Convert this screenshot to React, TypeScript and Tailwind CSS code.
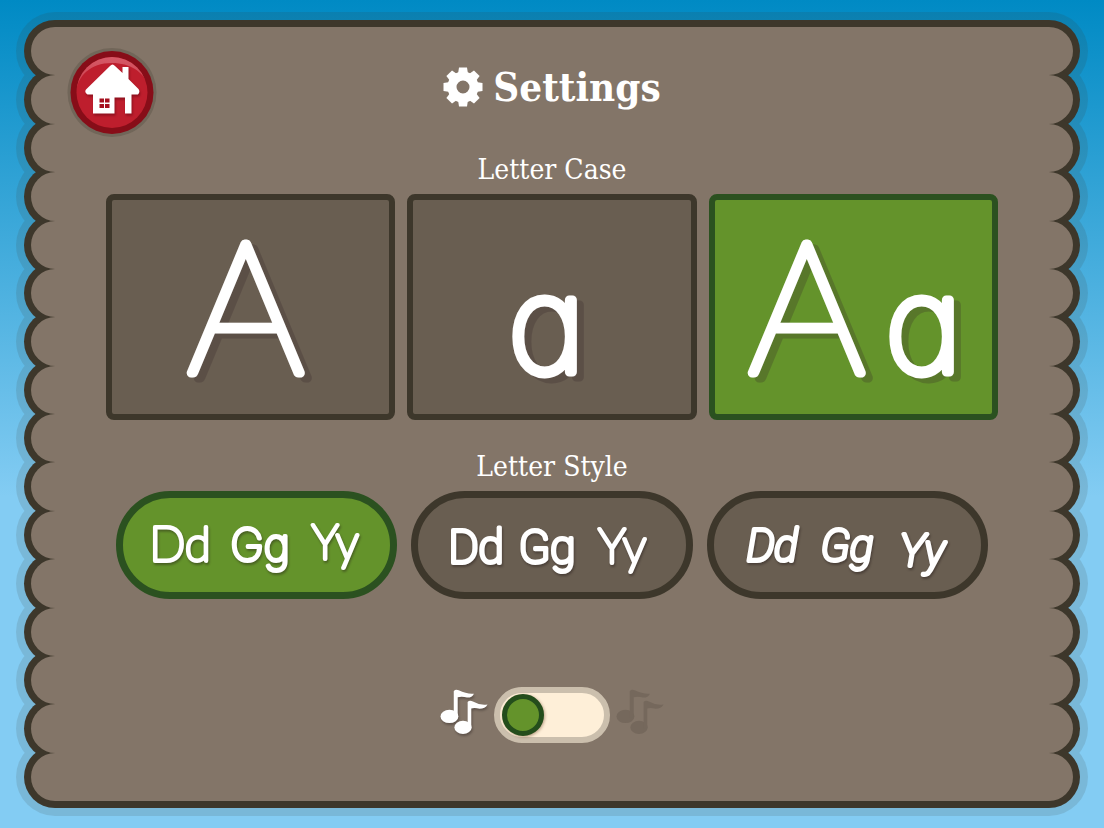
import React, { useState } from "react";

const LOBES = Array.from({ length: 16 });
const TEETH = [0, 45, 90, 135, 180, 225, 270, 315];

const Lobes = ({ className, lobe }: { className: string; lobe: string }) => (
  <div
    aria-hidden="true"
    className={`isolate col-start-1 row-start-1 flex flex-col ${className}`}
  >
    {LOBES.map((_, i) => (
      <div key={i} className={`flex-1 rounded-full ${lobe}`} />
    ))}
  </div>
);

const HomeIcon = () => (
  <svg viewBox="67 47 90 90" className="size-[90px]">
    <defs>
      <clipPath id="button-face">
        <circle cx="112" cy="92.500" r="35.500" />
      </clipPath>
      <linearGradient id="button-shine" x1="0" y1="0" x2="0" y2="1">
        <stop offset="0" stopColor="#d8606d" />
        <stop offset="1" stopColor="#c93a48" />
      </linearGradient>
    </defs>
    <circle cx="112" cy="92.500" r="44.500" fill="#716659" />
    <circle cx="112" cy="92.500" r="41.500" fill="#870d18" />
    <circle cx="112" cy="92.500" r="35.500" fill="#be1e2d" />
    <g clipPath="url(#button-face)">
      <path
        d="M74 50H150V92C148 76 134 63 112 63S78 76 76 92Z"
        fill="url(#button-shine)"
      />
    </g>
    <g
      fill="#fff"
      className="drop-shadow-[1px_2px_1px_rgba(80,0,10,0.45)]"
    >
      <path d="M110 66Q112.500 63 115 66L122.500 73V67H128.500V79L138.500 89Q140.500 92 138 94.500H131.500V113.500H125V97.500H114.500V113.500H93V94.500H87.500Q84 92.500 86 89.500Z" />
    </g>
    <path
      d="M99.500 98.500h4.500v4h-4.500zM105 98.500h4.500v4h-4.500zM99.500 104h4.500v4h-4.500zM105 104h4.500v4h-4.500z"
      fill="#a5101f"
    />
  </svg>
);

const GearIcon = () => (
  <svg viewBox="-20 -20 40 40" className="size-10" fill="#fff">
    <circle r="11" fill="none" stroke="#fff" strokeWidth="9" />
    {TEETH.map((angle) => (
      <path
        key={angle}
        d="M-5 -13L-4 -19.500H4L5 -13Z"
        transform={`rotate(${angle})`}
      />
    ))}
  </svg>
);

const NotesIcon = ({ className }: { className: string }) => (
  <svg
    viewBox="64 54 144 142"
    className={`h-[47px] w-12 ${className}`}
    fill="currentColor"
  >
    <ellipse cx="92" cy="140" rx="27" ry="20" />
    <path d="M105 64Q110 57 120 61Q145 73 166 71Q160 84 145 83Q130 78 117 82V143H105Z" />
    <ellipse cx="133" cy="173" rx="26" ry="20" />
    <path d="M147 96Q153 89 163 95Q186 108 207 104Q200 117 183 117Q168 113 158 116V176H147Z" />
  </svg>
);

const INTER = "Inter, sans-serif";
const LATO = "Lato, sans-serif";
const ROBOTO = "Roboto, sans-serif";

type Run = {
  text: string;
  x: number;
  y: number;
  size: number;
  font: string;
};

type Option = { id: string; label: string; runs: Run[]; italic?: boolean };

const CASES: Option[] = [
  {
    id: "upper",
    label: "Uppercase",
    runs: [{ text: "A", x: 134, y: 173, size: 184, font: LATO }],
  },
  {
    id: "lower",
    label: "Lowercase",
    runs: [{ text: "a", x: 134, y: 172, size: 132, font: INTER }],
  },
  {
    id: "both",
    label: "Uppercase and lowercase",
    runs: [
      { text: "A", x: 92, y: 173, size: 184, font: LATO },
      { text: "a", x: 209, y: 172, size: 132, font: INTER },
    ],
  },
];

const STYLES: Option[] = [
  {
    id: "round",
    label: "Round letters",
    runs: [
      { text: "Dd", x: 57, y: 63, size: 47, font: LATO },
      { text: "Gg", x: 137, y: 63, size: 45, font: INTER },
      { text: "Yy", x: 212, y: 61, size: 47, font: LATO },
    ],
  },
  {
    id: "narrow",
    label: "Narrow letters",
    runs: [
      { text: "Dd", x: 58, y: 65, size: 46, font: ROBOTO },
      { text: "Gg", x: 129, y: 65, size: 46, font: ROBOTO },
      { text: "Yy", x: 204, y: 65, size: 48, font: LATO },
    ],
  },
  {
    id: "slanted",
    label: "Slanted letters",
    italic: true,
    runs: [
      { text: "Dd", x: 58, y: 63, size: 44, font: ROBOTO },
      { text: "Gg", x: 133, y: 63, size: 44, font: ROBOTO },
      { text: "Yy", x: 208, y: 68, size: 44, font: ROBOTO },
    ],
  },
];

const Lettering = ({
  option,
  viewBox,
  stroke,
  className,
}: {
  option: Option;
  viewBox: string;
  stroke: number;
  className: string;
}) => (
  <svg
    viewBox={viewBox}
    className={`w-full overflow-visible ${className}`}
    fill="#fff"
    stroke="#fff"
    strokeWidth={stroke}
    strokeLinejoin="round"
    textAnchor="middle"
  >
    {option.runs.map((run) => (
      <text
        key={run.text}
        x={run.x}
        y={run.y}
        fontSize={run.size}
        fontFamily={run.font}
        fontWeight={100}
        fontStyle={option.italic ? "italic" : "normal"}
        className="[font-feature-settings:'cv11']"
      >
        {run.text}
      </text>
    ))}
  </svg>
);

const colors =
  "border-[#3d372b] bg-[#695e51] has-checked:border-[#2b5120] has-checked:bg-[#64932b] has-focus-visible:outline-2 has-focus-visible:outline-white";

const App = () => {
  const [letterCase, setLetterCase] = useState("both");
  const [letterStyle, setLetterStyle] = useState("round");
  const [muted, setMuted] = useState(false);

  return (
    <div className="grid min-h-screen bg-linear-to-b/srgb from-[#008ac4] to-[#83ccf3] to-60% px-[31px] py-[27px] font-['DejaVu_Serif_Condensed','DejaVu_Serif',serif] text-white">
      <Lobes
        className="opacity-[0.13]"
        lobe="bg-[#3d372b] shadow-[0_0_0_15px_#3d372b]"
      />
      <Lobes className="" lobe="bg-[#3d372b] shadow-[0_0_0_7px_#3d372b]" />
      <Lobes className="" lobe="bg-[#837568]" />
      <div className="isolate col-start-1 row-start-1 mx-6 bg-[#837568]" />

      <main className="isolate col-start-1 row-start-1 flex flex-col items-center px-9 pt-5 pb-14">
        <header className="grid w-full grid-cols-[1fr_auto_1fr] items-center">
          <button
            type="button"
            aria-label="Home"
            className="cursor-pointer justify-self-start rounded-full"
          >
            <HomeIcon />
          </button>
          <h1 className="flex items-center gap-2.5 pb-2.5 text-[40px] leading-10 font-bold">
            <GearIcon />
            Settings
          </h1>
        </header>

        <h2 id="case-title" className="mt-[17px] text-[28px] leading-8">
          Letter Case
        </h2>
        <div
          role="radiogroup"
          aria-labelledby="case-title"
          className="mt-2 grid w-full max-w-[893px] grid-cols-3 gap-3"
        >
          {CASES.map((option) => (
            <label
              key={option.id}
              className={`relative cursor-pointer rounded-lg border-[6px] ${colors}`}
            >
              <input
                type="radio"
                name="case"
                aria-label={option.label}
                checked={letterCase === option.id}
                onChange={() => setLetterCase(option.id)}
                className="sr-only"
              />
              <Lettering
                option={option}
                viewBox="0 0 278 214"
                stroke={9}
                className="drop-shadow-[7px_5px_0_rgba(50,35,40,0.25)]"
              />
            </label>
          ))}
        </div>

        <h2 id="style-title" className="mt-[31px] text-[28px] leading-8">
          Letter Style
        </h2>
        <div
          role="radiogroup"
          aria-labelledby="style-title"
          className="mt-2 grid w-full max-w-[872px] grid-cols-3 gap-3.5"
        >
          {STYLES.map((option) => (
            <label
              key={option.id}
              className={`relative cursor-pointer rounded-full border-[7px] ${colors}`}
            >
              <input
                type="radio"
                name="style"
                aria-label={option.label}
                checked={letterStyle === option.id}
                onChange={() => setLetterStyle(option.id)}
                className="sr-only"
              />
              <Lettering
                option={option}
                viewBox="0 0 267 94"
                stroke={4}
                className="drop-shadow-[1px_2px_1px_rgba(30,20,20,0.4)]"
              />
            </label>
          ))}
        </div>

        <div className="mt-[88px] flex items-center gap-1.5">
          <NotesIcon className="mb-1.5 drop-shadow-[1px_2px_1px_rgba(30,20,20,0.35)]" />
          <input
            type="checkbox"
            role="switch"
            aria-label="Mute music"
            checked={muted}
            onChange={() => setMuted(!muted)}
            className="flex h-14 w-[116px] cursor-pointer appearance-none items-center rounded-full border-[6px] border-[#cbbfad] bg-[#feefd8] px-0.5 before:size-[42px] before:rounded-full before:border-[5px] before:border-[#244d1c] before:bg-[#64932b] before:shadow-[1px_1px_3px_rgba(90,50,20,0.4)] checked:justify-end"
          />
          <NotesIcon className="mb-1.5 text-[#75685c]" />
        </div>
      </main>
    </div>
  );
};

export default App;
